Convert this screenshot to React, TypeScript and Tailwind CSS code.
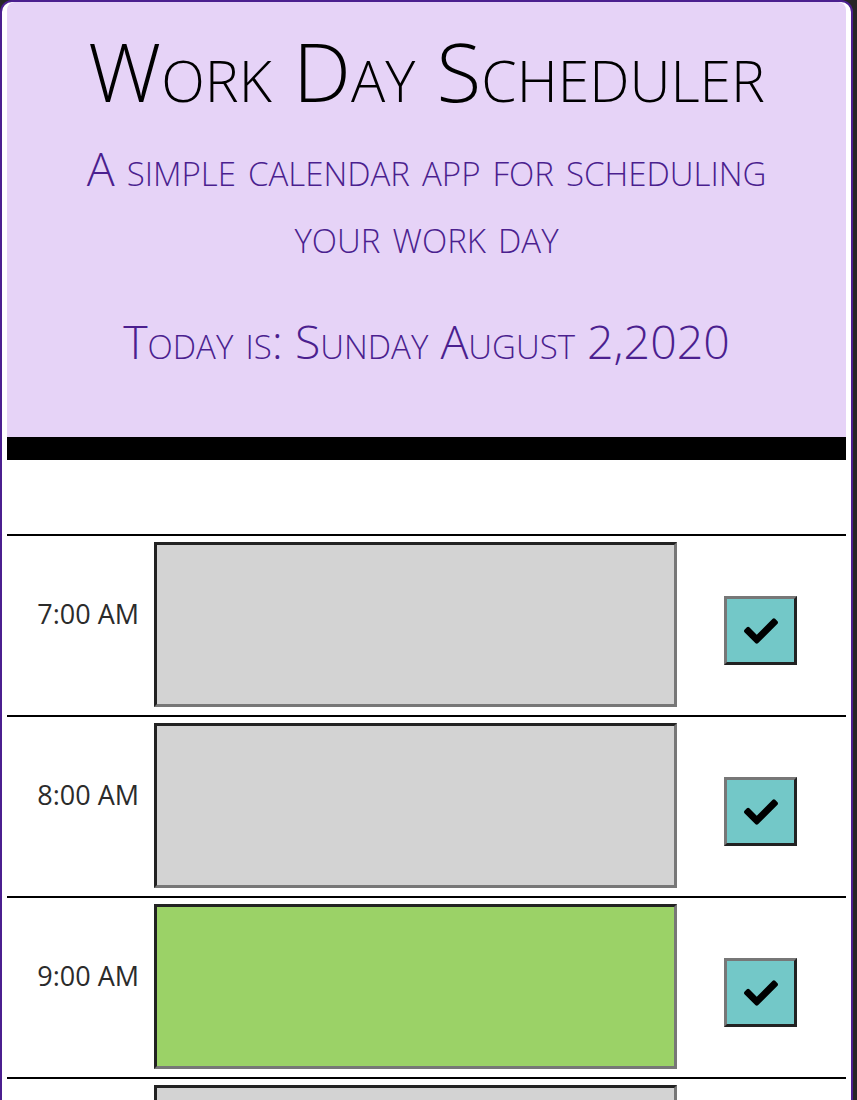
import { FaCheck } from "react-icons/fa";

const hours = [
  { label: "7:00 AM", status: "past" },
  { label: "8:00 AM", status: "past" },
  { label: "9:00 AM", status: "future" },
  { label: "10:00 AM", status: "past" },
  { label: "11:00 AM", status: "past" },
  { label: "12:00 PM", status: "past" },
  { label: "1:00 PM", status: "past" },
  { label: "2:00 PM", status: "past" },
  { label: "3:00 PM", status: "past" },
  { label: "4:00 PM", status: "past" },
  { label: "5:00 PM", status: "past" },
];

function HourRow({ label, status }: { label: string; status: string }) {
  return (
    <div className="flex items-start border-t-2 border-black h-[181px]">
      <div className="w-[147px] shrink-0 pt-[58px] pr-[15px] text-right text-[27px] text-[#2b2b2b]">
        {label}
      </div>
      <textarea
        className={`mt-[6px] w-[523px] h-[165px] shrink-0 resize-none border-[3px] border-t-[#222] border-l-[#222] border-b-[#777] border-r-[#777] outline-none ${
          status === "future" ? "bg-[#9bd267]" : "bg-[#d3d3d3]"
        }`}
      />
      <button className="ml-[47px] mt-[60px] w-[73px] h-[69px] shrink-0 flex items-center justify-center bg-[#73c8c8] border-[3px] border-t-[#777] border-l-[#777] border-b-[#222] border-r-[#222]">
        <FaCheck size={34} className="text-black" />
      </button>
    </div>
  );
}

export default function App() {
  return (
    <div className="min-h-screen bg-[#262626] font-['Open_Sans',sans-serif]">
      <div className="w-[853px] border-2 border-[#4b1f8f] rounded-t-xl bg-white px-[5px]">
        {/* Header */}
        <header className="bg-[#e6d3f7] rounded-t-lg border-b-[23px] border-black text-center [font-variant:small-caps] pt-[20px] pb-[62px]">
          <h1 className="text-[82px] font-light leading-[96px] text-black">Work Day Scheduler</h1>
          <p className="mt-[17px] text-[46.5px] font-light leading-[67px] text-[#4b1f8f] px-[70px]">
            A simple calendar app for scheduling your work day
          </p>
          <p className="mt-[39px] text-[46.5px] font-light leading-[67px] text-[#4b1f8f]">
            Today is: Sunday August 2,2020
          </p>
        </header>

        <div className="h-[74px]" />

        {hours.map((h) => (
          <HourRow key={h.label} label={h.label} status={h.status} />
        ))}
      </div>
    </div>
  );
}
